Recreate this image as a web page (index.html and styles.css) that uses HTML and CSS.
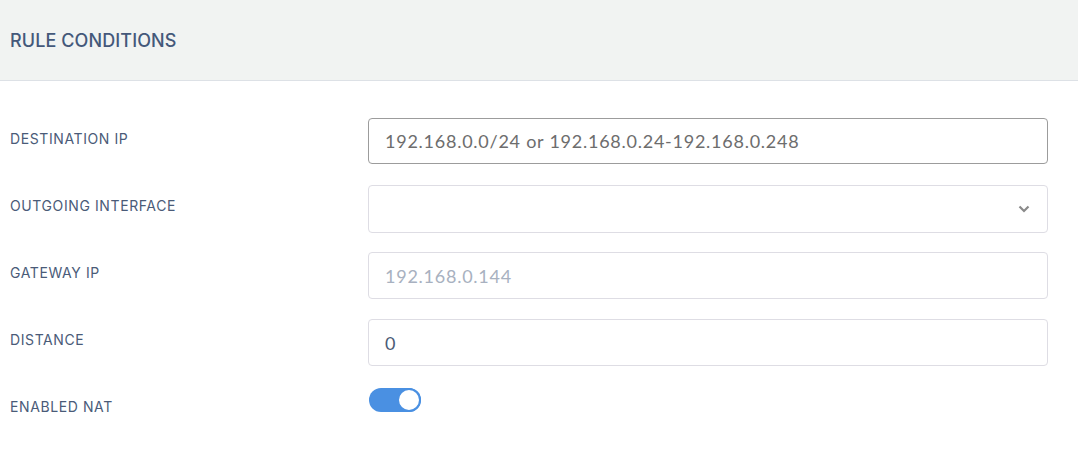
FILE: index.html
```html
<!DOCTYPE html>
<html lang="en">

<head>
    <meta charset="UTF-8">
    <meta name="viewport" content="width=device-width, initial-scale=1.0">
    <title>Rule Conditions</title>
    <link rel="stylesheet" href="styles.css">
</head>

<body>

    <div class="panel">
        <div class="panel-head">
            <h2>RULE CONDITIONS</h2>
        </div>

        <div class="panel-body">

            <div class="row">
                <label class="lbl">DESTINATION IP</label>
                <div class="field">
                    <input class="inp inp-active" type="text" value="192.168.0.0/24 or 192.168.0.24-192.168.0.248">
                </div>
            </div>

            <div class="row">
                <label class="lbl">OUTGOING INTERFACE</label>
                <div class="field">
                    <div class="select">
                        <svg class="chev" width="12" height="8" viewBox="0 0 12 8">
                            <path d="M1.5 1.5 L6 6 L10.5 1.5" fill="none" stroke="#8a8a8a" stroke-width="2.2" />
                        </svg>
                    </div>
                </div>
            </div>

            <div class="row">
                <label class="lbl">GATEWAY IP</label>
                <div class="field">
                    <input class="inp" type="text" placeholder="192.168.0.144">
                </div>
            </div>

            <div class="row">
                <label class="lbl">DISTANCE</label>
                <div class="field">
                    <input class="inp inp-num" type="text" value="0">
                </div>
            </div>

            <div class="row">
                <label class="lbl">ENABLED NAT</label>
                <div class="field">
                    <span class="toggle"><span class="knob"></span></span>
                </div>
            </div>

        </div>
    </div>

</body>

</html>
```

FILE: styles.css
```css
*,
*::after,
*::before {
    margin: 0;
    padding: 0;
    box-sizing: border-box;
}

body {
    background: #fff;
    font-family: "Inter", "Liberation Sans", sans-serif;
    width: 1078px;
}

.panel-head {
    background: #f1f3f2;
    border-bottom: 1px solid #dde1e6;
    height: 81px;
    display: flex;
    align-items: center;
    padding: 0 10px 0 10px;
}

.panel-head h2 {
    font-size: 18px;
    font-weight: 500;
    color: #44587a;
    letter-spacing: 0.1px;
}

.panel-body {
    padding: 37px 30px 0 10px;
}

.row {
    display: flex;
    align-items: flex-start;
    height: 67px;
}

.lbl {
    width: 358px;
    flex-shrink: 0;
    font-size: 14px;
    font-weight: 400;
    color: #4a5b78;
    padding-top: 12px;
    letter-spacing: 0.6px;
}

.field {
    flex: 1;
}

.inp,
.select {
    display: block;
    width: 100%;
    height: 47px;
    border: 1px solid #dedde4;
    border-radius: 4px;
    background: #fff;
    font-family: "Lato", sans-serif;
    font-size: 18px;
    letter-spacing: 0.75px;
    color: #6d6d6d;
    padding: 0 16px;
    outline: none;
}

.inp-active {
    border-color: #9c9c9c;
    height: 46px;
}

.inp::placeholder {
    color: #a8b1c0;
}

.inp-num {
    color: #4b5b76;
}

.select {
    display: flex;
    align-items: center;
    justify-content: flex-end;
    padding-right: 17px;
    height: 48px;
}

.toggle {
    display: inline-block;
    position: relative;
    width: 52px;
    height: 24px;
    border-radius: 12px;
    background: #4a90e2;
    margin-top: 2px;
    margin-left: 1px;
}

.knob {
    position: absolute;
    right: 0;
    top: 0;
    width: 24px;
    height: 24px;
    border-radius: 50%;
    background: #fff;
    border: 2px solid #4a90e2;
}
```
